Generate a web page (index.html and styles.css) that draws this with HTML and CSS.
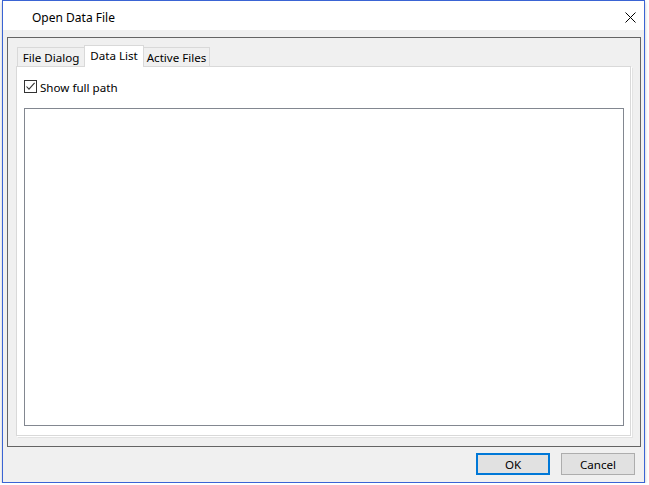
FILE: index.html
```html
<!DOCTYPE html>
<html>
<head>
<meta charset="utf-8">
<link rel="stylesheet" href="styles.css">
</head>
<body>
<div class="window">
  <div class="titlebar">
    <span class="title">Open Data File</span>
    <svg class="close" width="11" height="11" viewBox="0 0 11 11"><path d="M0.5 0.5L10.5 10.5M10.5 0.5L0.5 10.5" stroke="#000" stroke-width="1" fill="none"/></svg>
  </div>
  <div class="content">
    <div class="group">
      <div class="tabs">
        <div class="tab tab-file">File Dialog</div>
        <div class="tab tab-active">Data List</div>
        <div class="tab tab-files">Active Files</div>
      </div>
      <div class="page">
        <label class="check">
          <span class="box"><svg width="11" height="11" viewBox="0 0 11 11"><path d="M1.5 5.5L4 8.2L9.6 1.8" stroke="#333" stroke-width="1.1" fill="none"/></svg></span>
          <span class="check-label">Show full path</span>
        </label>
        <div class="list"></div>
      </div>
    </div>
    <div class="buttons">
      <button class="btn btn-default">OK</button>
      <button class="btn">Cancel</button>
    </div>
  </div>
</div>
</body>
</html>
```
FILE: styles.css
```css
html, body {
  margin: 0;
  padding: 0;
  background: #ffffff;
}
body {
  font-family: "Noto Sans", "Open Sans", sans-serif;
  font-size: 11.6px;
  color: #000;
}
.window {
  box-sizing: border-box;
  margin-left: 2px;
  width: 643px;
  height: 483px;
  border: 1px solid #3a64d4;
  background: #f0f0f0;
  box-shadow: 0 2px 3px rgba(0, 0, 0, 0.25);
  display: flex;
  flex-direction: column;
}
.titlebar {
  height: 29px;
  background: #ffffff;
  display: flex;
  align-items: center;
  justify-content: space-between;
  padding: 0 7px 0 29px;
  box-sizing: border-box;
}
.title {
  font-size: 12px;
  position: relative;
  top: 2px;
}
.close {
  display: block;
  margin-right: 1px;
  position: relative;
  top: 2px;
}
.content {
  padding: 7px 3px 0 4px;
  display: flex;
  flex-direction: column;
}
.group {
  box-sizing: border-box;
  height: 410px;
  border: 1px solid #646464;
  padding: 7px 0 0 8px;
}
.tabs {
  display: flex;
  height: 21px;
  align-items: flex-end;
}
.tab {
  box-sizing: border-box;
  height: 19px;
  border: 1px solid #d9d9d9;
  border-bottom: none;
  background: #f0f0f0;
  display: flex;
  align-items: center;
  justify-content: center;
  line-height: 1;
  padding-top: 2px;
}
.tab-file {
  width: 67px;
  margin-left: 1px;
  border-right: none;
}
.tab-active {
  width: 60px;
  background: #ffffff;
  padding-top: 0;
  padding-bottom: 2px;
  position: relative;
  z-index: 1;
  margin-bottom: -1px;
  height: 22px;
}
.tab-files {
  width: 66px;
  border-left: none;
}
.page {
  box-sizing: border-box;
  width: 615px;
  height: 370px;
  background: #ffffff;
  border: 1px solid #d9d9d9;
  box-shadow: 1px 1px 0 #ffffff, 2px 2px 0 #e3e3e3;
  padding: 13px 0 0 7px;
  display: flex;
  flex-direction: column;
}
.check {
  display: flex;
  align-items: center;
  height: 13px;
}
.box {
  box-sizing: border-box;
  width: 13px;
  height: 13px;
  border: 1px solid #333333;
  background: #fff;
  display: flex;
  align-items: center;
  justify-content: center;
}
.box svg {
  display: block;
}
.check-label {
  margin-left: 3px;
  position: relative;
  top: 1px;
}
.list {
  box-sizing: border-box;
  margin-top: 15px;
  width: 600px;
  height: 318px;
  border: 1px solid #828790;
  background: #ffffff;
}
.buttons {
  display: flex;
  justify-content: flex-end;
  gap: 11px;
  margin-top: 6px;
  padding-right: 6px;
}
.btn {
  box-sizing: border-box;
  width: 74px;
  height: 22px;
  background: #e1e1e1;
  border: 1px solid #adadad;
  font-family: "Noto Sans", "Open Sans", sans-serif;
  font-size: 11.6px;
  color: #000;
  padding: 2px 0 0 0;
  margin: 0;
  line-height: 1;
}
.btn-default {
  border: 2px solid #0078d7;
}
```
